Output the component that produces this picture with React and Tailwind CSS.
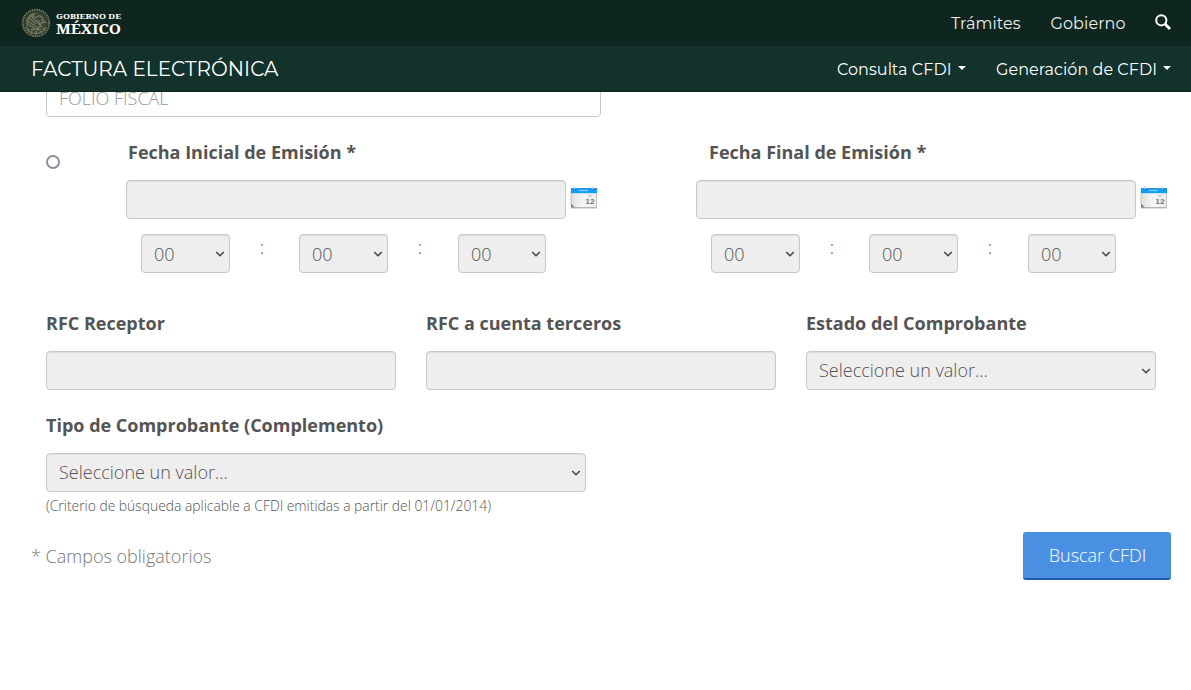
const fieldBox =
  'h-[39px] rounded-[4px] border border-[#c8c8c8] bg-[#eee] shadow-[inset_0_1px_1px_rgba(0,0,0,0.075)] outline-none';

function Select({ value, className, selectClass = '' }) {
  return (
    <div className={`grid items-center ${className}`}>
      <select
        disabled
        className={`${fieldBox} ${selectClass} col-start-1 row-start-1 w-full appearance-none pl-3 text-[18px] font-light text-[#545454] opacity-100`}
      >
        <option>{value}</option>
      </select>
      <svg
        viewBox="0 0 10 8"
        className="pointer-events-none col-start-1 row-start-1 mr-[5px] h-2 w-[10px] justify-self-end"
        fill="none"
        stroke="#454545"
        strokeWidth="1.5"
      >
        <path d="M1.2 2 L5 5.8 L8.8 2" />
      </svg>
    </div>
  );
}

function Calendar() {
  return (
    <svg viewBox="0 0 28 24" className="mt-[5px] ml-1 h-6 w-7 shrink-0">
      <defs>
        <linearGradient id="sheet" x1="0" x2="1" y1="0" y2="0">
          <stop offset="0" stopColor="#dedede" />
          <stop offset="0.45" stopColor="#f8f8f8" />
          <stop offset="1" stopColor="#ededed" />
        </linearGradient>
      </defs>
      <path d="M1 6H26.5V22.5H5L1 19Z" fill="url(#sheet)" stroke="#c4c4c4" />
      <path d="M1 22.9H27" stroke="#aaa" />
      <path d="M1 3H27V8.2H1Z" fill="#149df2" />
      <path d="M1 3H27V3.7H1Z" fill="#2d8fd3" />
      <path d="M9 5.5H18" stroke="#7accff" strokeWidth="1.3" />
      <path d="M4.8 1.5V4M22.5 1.5V4" stroke="#c6d5df" strokeWidth="1.3" />
      <path d="M5.2 4.5h.8M22.9 4.5h.8" stroke="#315e7b" />
      <path d="M6.5 9V19M9.5 9V19M12.5 9V19" stroke="#e6e6e6" strokeWidth="0.6" />
      <path d="M18 10.8h4" stroke="#b9b9b9" />
      <path d="M1 18L5 22.8H1Z" fill="#8c8c8c" />
      <path d="M1.5 18L5 18.6L5 22Z" fill="#e9e9e9" />
      <text x="15.3" y="19.3" fontFamily="Liberation Sans" fontWeight="700" fontSize="7.8" textLength="9.4" lengthAdjust="spacingAndGlyphs" fill="#777">12</text>
    </svg>
  );
}

function DateGroup({ label }) {
  return (
    <section className="w-[475px]">
      <h2 className="h-[63px] pt-[22px] text-[18px] leading-[27px] font-bold">{label}</h2>
      <div className="flex">
        <input disabled className={`${fieldBox} w-[440px]`} />
        <Calendar />
      </div>
      <div className="mt-[15px] ml-[15px] flex">
        <Select value="00" className="w-[89px]" selectClass="pt-[2px]" />
        <span className="w-[69px] pl-[29.7px] text-[18px] leading-[27px] font-light">:</span>
        <Select value="00" className="w-[89px]" selectClass="pt-[2px]" />
        <span className="w-[70px] pl-[29.7px] text-[18px] leading-[27px] font-light">:</span>
        <Select value="00" className="w-[88px]" selectClass="pt-[2px]" />
      </div>
    </section>
  );
}

function Seal() {
  return (
    <svg viewBox="0 0 30 30" className="h-[30px] w-[30px]" fill="none" stroke="#77775f">
      <circle cx="15" cy="15" r="11.8" fill="#384636" stroke="none" />
      <circle cx="15" cy="15" r="13.2" strokeWidth="2" strokeDasharray="1.6 0.7" />
      <path d="M7 18C5 12 8 7 13 6C11 8 12 9.5 15 9.5C19 6 23 9 21 12L24 14L20 15C20 19 17 22 12 21" strokeWidth="1.4" />
      <path d="M8 10L15 16M6.5 13L14 18M10 8L17 15M8 17L13 20M14 12L21 19M17 12L19 16M12 17L18 20" strokeWidth="1.2" />
      <path d="M5 19C8 25 11 25.5 15 25.5C19 25.5 23 23 25 19M8 21L7 24M11 23L10 26M15 23V27M19 23L21 25M22 20L24 22" strokeWidth="1.2" />
      <path d="M10 22C14 20 17 23 20 21" strokeWidth="1.5" />
    </svg>
  );
}

function MenuLink({ children, className }) {
  return (
    <a className="flex items-center whitespace-nowrap">
      <span className={className}>{children}</span>
      <svg viewBox="0 0 8 4" className="mb-[2px] h-1 w-2" fill="white">
        <path d="M0 0H8L4 4Z" />
      </svg>
    </a>
  );
}

export default function App() {
  return (
    <div className="h-[690px] overflow-hidden bg-white font-['Open_Sans','Noto_Sans',sans-serif] text-[#545454]">
      <header className="relative z-10 font-[Montserrat,Lato,sans-serif] text-white">
        <div className="flex h-[46px] items-center justify-between bg-[#0f251f] pr-5 pl-[21px]">
          <a className="flex items-center">
            <Seal />
            <svg viewBox="0 0 68 26" className="ml-1 h-[26px] w-[68px]" fill="white" fontFamily="Noto Serif, Liberation Serif, serif" fontWeight="700">
              <text x="1" y="9.4" fontSize="7.8" textLength="65" lengthAdjust="spacingAndGlyphs">GOBIERNO DE</text>
              <text x="1" y="23.5" fontSize="13.8" textLength="65" lengthAdjust="spacingAndGlyphs">MÉXICO</text>
            </svg>
          </a>
          <nav className="flex items-center text-[16px] leading-6 text-[#eceeed]">
            <a className="w-[99.5px] pt-[2px] tracking-[0.1px]">Trámites</a>
            <a className="w-[104.5px] pt-[2px] tracking-[0.1px]">Gobierno</a>
            <svg viewBox="0 0 16 16" className="mb-[3px] h-4 w-4" fill="none" stroke="white">
              <circle cx="6.3" cy="6.3" r="5.1" strokeWidth="2" />
              <path d="M10 10L15 15" strokeWidth="2.8" />
            </svg>
          </nav>
        </div>
        <div className="flex h-[46px] items-center justify-between border-b border-[#10251f] bg-[#13322b] pr-5 pl-[31px]">
          <h1 className="text-[20px] leading-6 tracking-[0.04px] whitespace-nowrap">FACTURA ELECTRÓNICA</h1>
          <nav className="flex gap-[30px] text-[16px] leading-6 tracking-[0.05px]">
            <MenuLink className="w-[121px] pt-[2px]">Consulta CFDI</MenuLink>
            <MenuLink className="w-[167px] pt-[2px]">Generación de CFDI</MenuLink>
          </nav>
        </div>
      </header>

      <main className="-mt-[14px]">
        <input
          placeholder="FOLIO FISCAL"
          className="ml-[46px] block h-[39px] w-[555px] rounded-[4px] border border-[#c8c8c8] bg-white px-3 text-[18px] font-light outline-none placeholder:text-[#999]"
        />
        <div className="flex pl-[46px]">
          <span className="mt-[38px] mr-[66px] h-[14px] w-[14px] rounded-full border-2 border-[#8f8f9d] bg-white" />
          <DateGroup label={<span className="pl-[2px]">Fecha Inicial de Emisión *</span>} />
          <div className="w-[95px]" />
          <DateGroup label={<span className="pl-[13px]">Fecha Final de Emisión *</span>} />
        </div>
        <div className="mt-[37px] ml-[46px] grid w-[1110px] grid-cols-3 gap-[30px]">
          <label className="text-[18px] leading-[27px] font-bold">
            <span className="mb-[14px] block">RFC Receptor</span>
            <input disabled className={`${fieldBox} block w-full`} />
          </label>
          <label className="text-[18px] leading-[27px] font-bold">
            <span className="mb-[14px] block">RFC a cuenta terceros</span>
            <input disabled className={`${fieldBox} block w-full`} />
          </label>
          <label className="text-[18px] leading-[27px] font-bold">
            <span className="mb-[14px] block">Estado del Comprobante</span>
            <Select value="Seleccione un valor..." className="w-full" />
          </label>
        </div>
        <div className="mt-[22px] ml-[46px] w-[540px]">
          <h2 className="mb-[14px] text-[18px] leading-[27px] font-bold">Tipo de Comprobante (Complemento)</h2>
          <Select value="Seleccione un valor..." className="w-full" />
          <p className="mt-1 text-[13.86px] leading-5 font-light whitespace-nowrap">(Criterio de búsqueda aplicable a CFDI emitidas a partir del 01/01/2014)</p>
        </div>
        <div className="mt-4 flex items-center justify-between pr-5 pl-[31px]">
          <p className="text-[18px] leading-[27px] font-light text-[#777]">* Campos obligatorios</p>
          <button className="h-12 w-[148px] rounded-[3px] border-b-2 border-[#1f5cae] bg-[#4a90e2] pl-[1px] text-[18px] leading-[27px] font-light text-white">Buscar CFDI</button>
        </div>
      </main>
    </div>
  );
}
